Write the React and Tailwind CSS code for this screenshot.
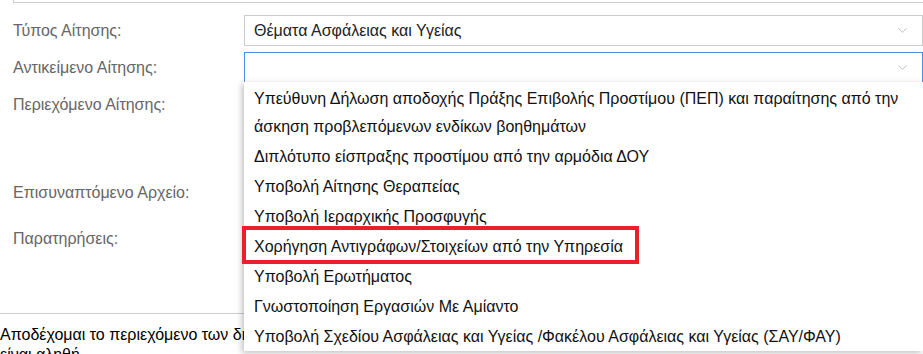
import { ChevronDown } from 'lucide-react'

const OPTIONS = [
  'Υπεύθυνη Δήλωση αποδοχής Πράξης Επιβολής Προστίμου (ΠΕΠ) και παραίτησης από την άσκηση προβλεπόμενων ενδίκων βοηθημάτων',
  'Διπλότυπο είσπραξης προστίμου από την αρμόδια ΔΟΥ',
  'Υποβολή Αίτησης Θεραπείας',
  'Υποβολή Ιεραρχικής Προσφυγής',
  'Χορήγηση Αντιγράφων/Στοιχείων από την Υπηρεσία',
  'Υποβολή Ερωτήματος',
  'Γνωστοποίηση Εργασιών Με Αμίαντο',
  'Υποβολή Σχεδίου Ασφάλειας και Υγείας /Φακέλου Ασφάλειας και Υγείας (ΣΑΥ/ΦΑΥ)',
]

function Select({ value, focused }) {
  return (
    <div
      className={`flex-1 h-[31px] flex items-center pl-[9px] pr-[12px] bg-white border ${
        focused ? 'border-[#4a90d9]' : 'border-[#cccccc]'
      }`}
    >
      <span className="flex-1 text-[16px] text-[#222]">{value}</span>
      <ChevronDown size={15} strokeWidth={1.3} className="text-[#b0b0b0]" />
    </div>
  )
}

export default function App() {
  return (
    <div className="relative w-[923px] h-[354px] overflow-hidden bg-white font-['Liberation_Sans',Arial,sans-serif]">
      {/* previous field */}
      <div className="ml-[13px] h-[3px] border-l border-b border-[#cccccc]" />

      <div className="pl-[13px]">
        <div className="flex items-center mt-[12px]">
          <label className="w-[231px] text-[16px] text-[#666]">Τύπος Αίτησης:</label>
          <Select value="Θέματα Ασφάλειας και Υγείας" />
        </div>
        <div className="flex items-center mt-[6px]">
          <label className="w-[231px] text-[16px] text-[#666]">Αντικείμενο Αίτησης:</label>
          <Select value="" focused />
        </div>

        <div className="mt-[10px] h-[88px] text-[16px] text-[#666]">Περιεχόμενο Αίτησης:</div>
        <div className="h-[46px] text-[16px] text-[#666]">Επισυναπτόμενο Αρχείο:</div>
        <div className="h-[86px] text-[16px] text-[#666]">Παρατηρήσεις:</div>
      </div>

      <div className="border-t border-[#cccccc]" />
      <p className="mt-[11px] text-[16px] leading-[20px] text-black">
        Αποδέχομαι το περιεχόμενο των δηλώσεων και τους όρους χρήσης της εφαρμογής και δηλώνω ότι τα στοιχεία που υποβάλλω είναι αληθή.
      </p>

      {/* open dropdown list */}
      <div className="absolute left-[244px] right-0 top-[82px] bg-white shadow-[-2px_2px_6px_rgba(0,0,0,0.25)] pt-[2px]">
        {OPTIONS.map((o, i) => (
          <div
            key={i}
            className={`px-[10px] text-[16px] text-[#111] leading-[28px] ${i === 0 ? 'pr-[20px]' : ''} ${
              i === OPTIONS.length - 1 ? 'pt-[1px] pb-0' : 'py-[1px]'
            }`}
          >
            {o}
          </div>
        ))}
      </div>

      {/* highlight annotation */}
      <div className="absolute left-[242px] top-[226px] w-[397px] h-[38px] border-[4px] border-[#e8202a]" />
    </div>
  )
}
